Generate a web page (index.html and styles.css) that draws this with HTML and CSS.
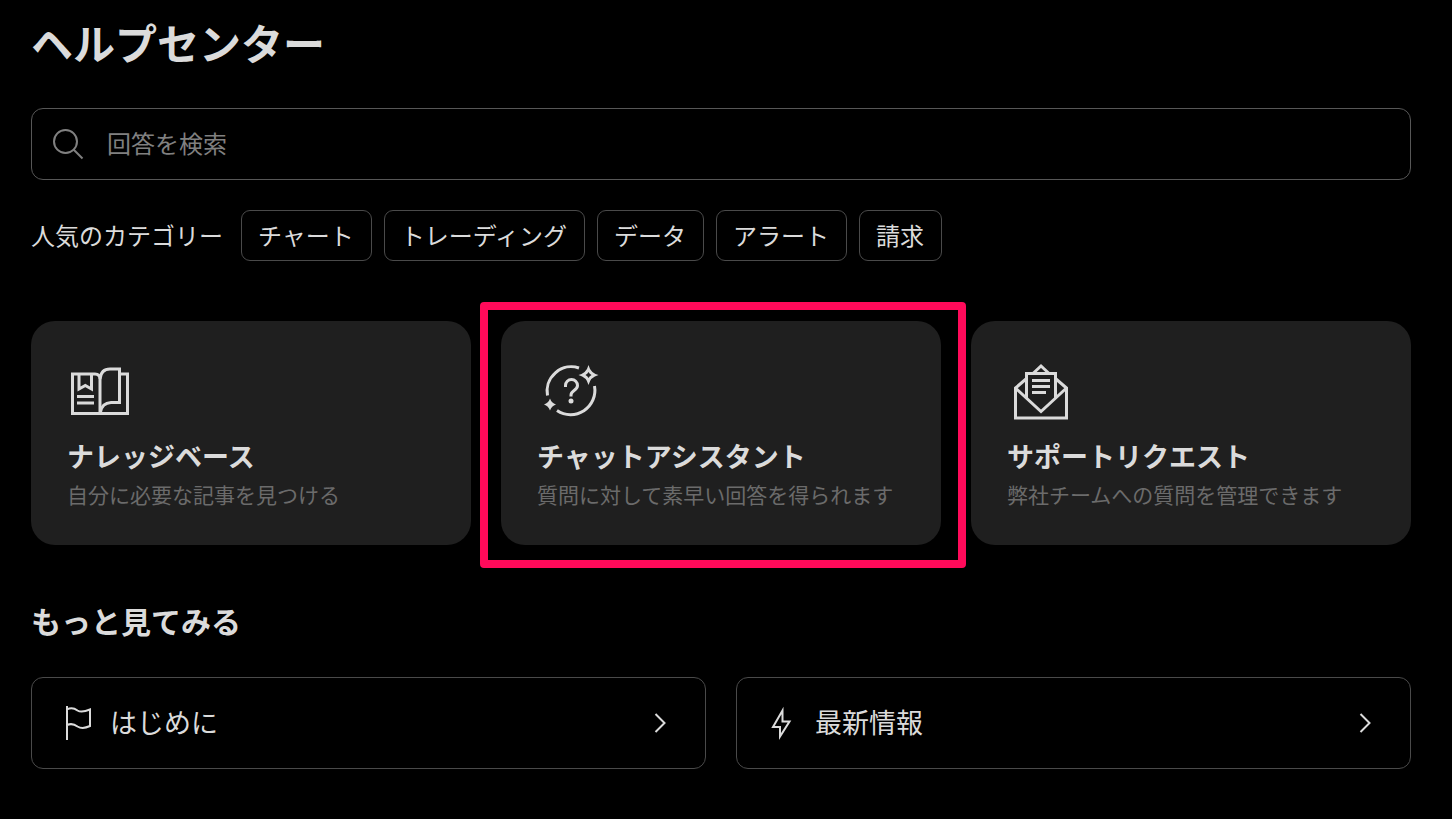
FILE: index.html
```
<!DOCTYPE html>
<html lang="ja">
<head>
    <meta charset="UTF-8">
    <meta name="viewport" content="width=device-width, initial-scale=1.0">
    <title>ヘルプセンター</title>
    <link rel="stylesheet" href="styles.css">
</head>
<body>
    <main class="container">
        <h1>ヘルプセンター</h1>

        <label class="search">
            <svg class="icon" viewBox="0 0 36 36" aria-hidden="true">
                <circle cx="15.5" cy="15.5" r="11.5"/>
                <path d="M23.5 23.5L32.5 32.5"/>
            </svg>
            <input type="text" placeholder="回答を検索" aria-label="回答を検索">
        </label>

        <div class="categories">
            <span class="categories-label">人気のカテゴリー</span>
            <a class="chip" href="#">チャート</a>
            <a class="chip" href="#">トレーディング</a>
            <a class="chip" href="#">データ</a>
            <a class="chip" href="#">アラート</a>
            <a class="chip" href="#">請求</a>
        </div>

        <div class="cards">
            <a class="card" href="#">
                <svg class="card-icon" viewBox="-1 -1 68 68" aria-hidden="true">
                    <path d="M32 55.5V21Q32 16 27 16H4.5V55.5H59.5V16H53"/>
                    <path d="M32 21Q33 11 42 11H51.5V44.5H43Q34 45 32.5 54"/>
                    <path d="M11 16V31L17.3 27.5L23.5 31V16M9 38.5H26M9 45H26"/>
                </svg>
                <h3>ナレッジベース</h3>
                <p>自分に必要な記事を見つける</p>
            </a>
            <a class="card highlighted" href="#">
                <svg class="card-icon" viewBox="-1 -1 68 68" aria-hidden="true">
                    <path d="M9.5 37.5A24.3 24.3 0 0 1 41 10M56.5 28A24.3 24.3 0 0 1 19 52.5"/>
                    <path d="M27.5 29V27.5A6 6 0 0 1 39.5 27.5C39.5 32.5 33 32.500 33 37V38.5"/>
                    <circle class="solid" cx="33" cy="43" r="2.5"/>
                    <path class="solid" fill-rule="evenodd" d="M50.5 7Q52.5 15 60.5 17Q52.5 19 50.5 27Q48.5 19 40.5 17Q48.5 15 50.5 7ZM50.5 14Q49.5 16 47.5 17Q49.5 18 50.5 20Q51.5 18 53.5 17Q51.5 16 50.5 14Z"/>
                    <path class="solid" d="M12 40.5Q13.5 45 18 46.5Q13.5 48 12 52.5Q10.500 48 6 46.5Q10.500 45 12 40.5Z"/>
                </svg>
                <h3>チャットアシスタント</h3>
                <p>質問に対して素早い回答を得られます</p>
            </a>
            <a class="card" href="#">
                <svg class="card-icon" viewBox="-1 -1 68 68" aria-hidden="true">
                    <path d="M18 21L7.5 30V60H58.5V30L48 21M7.5 30L33 53.5L58.5 30"/>
                    <path d="M18.5 40V15.5H47.5V40M25.5 15L33 8L40.5 15"/>
                    <path d="M24 22.5H42M24 28.5H42M24 34.5H38"/>
                </svg>
                <h3>サポートリクエスト</h3>
                <p>弊社チームへの質問を管理できます</p>
            </a>
        </div>

        <h2>もっと見てみる</h2>
        <div class="links">
            <a class="link" href="#">
                <svg class="icon" viewBox="0 0 36 36" aria-hidden="true">
                    <path d="M7 1V35M7 4.5C10.5 2.5 13.5 2.5 17.5 5.5Q21.5 8 30 4.5V21Q22.5 24.5 17.5 21.5C13.5 18.5 10.5 18.5 7 20"/>
                </svg>
                <span>はじめに</span>
                <svg class="icon arrow" viewBox="0 0 36 36" aria-hidden="true">
                    <path d="M14.5 9L23.5 18L14.5 27"/>
                </svg>
            </a>
            <a class="link" href="#">
                <svg class="icon" viewBox="0 0 36 36" aria-hidden="true">
                    <path d="M17.5 5.5L8 22H15V31.5L24.5 16.5H17.5Z"/>
                </svg>
                <span>最新情報</span>
                <svg class="icon arrow" viewBox="0 0 36 36" aria-hidden="true">
                    <path d="M14.5 9L23.5 18L14.5 27"/>
                </svg>
            </a>
        </div>
    </main>
</body>
</html>
```
FILE: styles.css
```
* {
    box-sizing: border-box;
}

body {
    margin: 0;
    background-color: #000;
    color: #dbdbdb;
    font-family: "Noto Sans CJK JP", sans-serif;
}

a {
    color: inherit;
    text-decoration: none;
}

h1, h2, h3, p {
    margin: 0;
}

svg {
    display: block;
    flex: none;
    fill: none;
    stroke: currentColor;
    stroke-width: 3;
}

.container {
    padding: 14px 41px 50px 31px;
}

h1 {
    font-size: 42px;
    line-height: 56px;
    margin-bottom: 38px;
}

.icon {
    width: 36px;
    height: 36px;
    stroke-width: 2;
}

/* Search */
.search {
    display: flex;
    align-items: center;
    gap: 21px;
    height: 72px;
    padding: 0 18px;
    border: 1px solid #575757;
    border-radius: 12px;
    color: #808080;
}

.search input {
    flex: 1;
    min-width: 0;
    padding: 0 0 2px;
    border: none;
    outline: none;
    background: none;
    color: #dbdbdb;
    font-family: inherit;
    font-size: 24px;
    line-height: 36px;
}

.search input::placeholder {
    color: #808080;
    opacity: 1;
}

/* Popular categories */
.categories {
    display: flex;
    flex-wrap: wrap;
    align-items: center;
    gap: 12px;
    margin-top: 30px;
    font-size: 24px;
    line-height: 47px;
}

.categories-label {
    margin-right: 6px;
    padding-bottom: 2px;
}

.chip {
    padding: 0 17px 2px 16px;
    border: 1px solid #4a4a4a;
    border-radius: 9px;
}

/* Cards */
.cards {
    display: grid;
    grid-template-columns: repeat(3, 1fr);
    gap: 30px;
    margin-top: 60px;
}

.card {
    padding: 36px 36px 33px;
    border-radius: 24px;
    background-color: #1f1f1f;
}

.card-icon {
    width: 68px;
    height: 68px;
}

.solid {
    fill: currentColor;
    stroke: none;
}

.card h3 {
    margin-top: 11px;
    font-size: 27px;
    line-height: 40px;
}

.card p {
    color: #6b6b6b;
    font-size: 21px;
    line-height: 36px;
}

.highlighted {
    position: relative;
}

.highlighted::after {
    content: "";
    position: absolute;
    top: -19px;
    right: -25px;
    bottom: -23px;
    left: -21px;
    border: 8px solid #ff0a5a;
    border-radius: 4px;
    pointer-events: none;
}

/* More links */
h2 {
    margin: 55px 0 37px;
    font-size: 30px;
    line-height: 40px;
}

.links {
    display: grid;
    grid-template-columns: repeat(2, 1fr);
    gap: 30px;
}

.link {
    display: flex;
    align-items: center;
    gap: 14px;
    padding: 25px 28px;
    border: 1px solid #4a4a4a;
    border-radius: 12px;
    font-size: 27px;
    line-height: 38px;
}

.link span {
    padding-bottom: 2px;
}

.arrow {
    margin-left: auto;
}
```
